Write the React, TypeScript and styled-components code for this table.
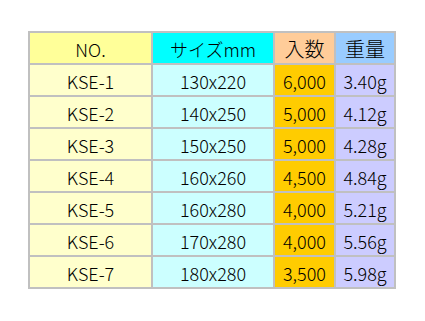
import React from 'react'
import { styled, createGlobalStyle } from 'styled-components'

type Row = {
  no: string
  size: string
  qty: string
  weight: string
}

const rows: Row[] = [
  { no: 'KSE-1', size: '130x220', qty: '6,000', weight: '3.40g' },
  { no: 'KSE-2', size: '140x250', qty: '5,000', weight: '4.12g' },
  { no: 'KSE-3', size: '150x250', qty: '5,000', weight: '4.28g' },
  { no: 'KSE-4', size: '160x260', qty: '4,500', weight: '4.84g' },
  { no: 'KSE-5', size: '160x280', qty: '4,000', weight: '5.21g' },
  { no: 'KSE-6', size: '170x280', qty: '4,000', weight: '5.56g' },
  { no: 'KSE-7', size: '180x280', qty: '3,500', weight: '5.98g' },
]

const headColors = ['#ffff99', '#00ffff', '#ffcc99', '#99ccff']
const bodyColors = ['#ffffcc', '#ccffff', '#ffcc00', '#ccccff']

const GlobalStyle = createGlobalStyle`
  body {
    margin: 0;
    background: #fff;
  }
`

const Page = styled.div`
  width: 425px;
  height: 321px;
  padding: 31px 0 0 28px;
  box-sizing: border-box;
`

const Table = styled.div`
  display: grid;
  grid-template-columns: 121px 120px 59px 58px;
  grid-auto-rows: 30px;
  gap: 2px;
  padding: 2px;
  width: fit-content;
  background: #c0c0c0;
  font-family: "Noto Sans CJK JP", "Noto Sans", sans-serif;
  font-size: 18px;
  font-weight: 300;
  color: #000;
`

const Cell = styled.div<{ $bg: string; $big?: boolean }>`
  display: flex;
  align-items: center;
  justify-content: center;
  padding-top: 2px;
  box-sizing: border-box;
  background: ${(props) => props.$bg};
  font-size: ${(props) => (props.$big ? '20px' : '18px')};
  white-space: nowrap;
  line-height: 1;
`

const App: React.FC = () => {
  return (
    <Page>
      <GlobalStyle />
      <Table>
        <Cell $bg={headColors[0]}>NO.</Cell>
        <Cell $bg={headColors[1]}>サイズmm</Cell>
        <Cell $bg={headColors[2]} $big>入数</Cell>
        <Cell $bg={headColors[3]} $big>重量</Cell>
        {rows.map((r) => (
          <React.Fragment key={r.no}>
            <Cell $bg={bodyColors[0]}>{r.no}</Cell>
            <Cell $bg={bodyColors[1]}>{r.size}</Cell>
            <Cell $bg={bodyColors[2]}>{r.qty}</Cell>
            <Cell $bg={bodyColors[3]}>{r.weight}</Cell>
          </React.Fragment>
        ))}
      </Table>
    </Page>
  )
}

export default App
